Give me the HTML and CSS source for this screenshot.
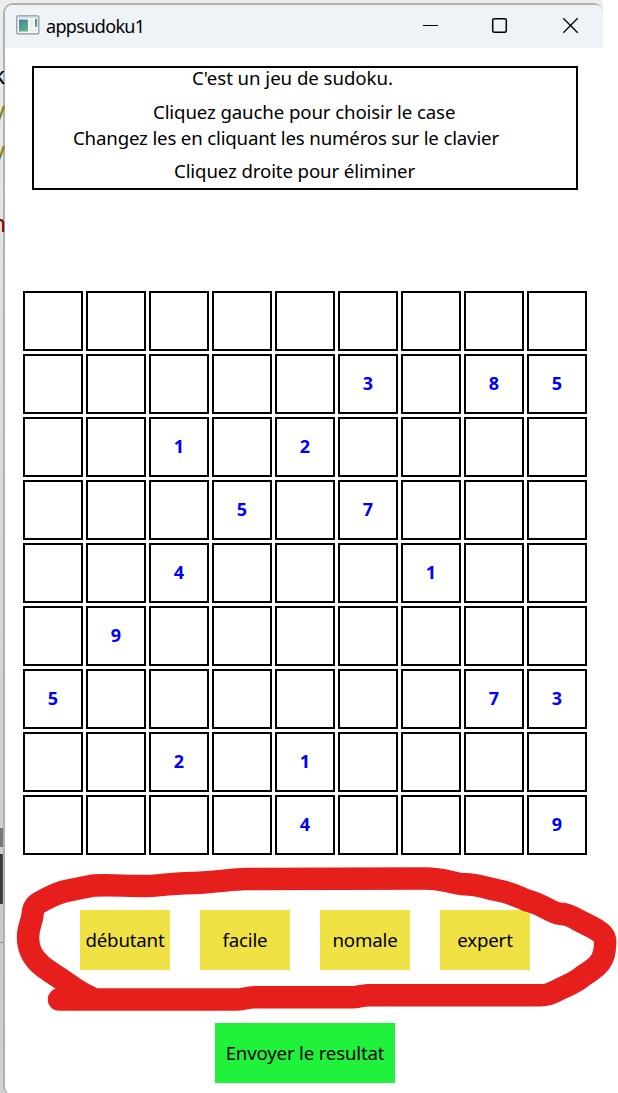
FILE: index.html
```html
<!DOCTYPE html>
<html lang="fr">
<head>
<meta charset="utf-8">
<title>appsudoku1</title>
<link rel="stylesheet" href="styles.css">
</head>
<body>
<div class="backdrop"></div>
<main class="window">
  <header class="titlebar">
    <svg class="app-icon" width="24" height="20" viewBox="0 0 24 20">
      <rect x=".8" y=".8" width="22" height="18" rx="1" fill="#f8f9fa" stroke="#8b9198" stroke-width="1.2"/>
      <path d="M1.5 2h20.500" stroke="#c3cad2" stroke-width="1.400"/>
      <rect x="3" y="4.500" width="9" height="12" fill="url(#pane)"/>
      <rect x="14" y="4" width="3.500" height="8" fill="#eceeee"/>
      <rect x="19" y="4" width="2.200" height="8" fill="url(#pane)"/>
      <rect x="14" y="13" width="7" height="3.500" fill="#ebeceb"/>
      <defs><linearGradient id="pane" x2=".6" y2="1"><stop stop-color="#457fae"/><stop offset="1" stop-color="#5db184"/></linearGradient></defs>
    </svg>
    <h1 class="title">appsudoku1</h1>
    <svg class="controls" width="158" height="18" viewBox="0 0 158 18" fill="none" stroke="#000" stroke-width="1.300">
      <path d="M1 8.500h15" stroke-width="1"/>
      <rect x="70.700" y="1.700" width="13.600" height="13.600" rx="1.500" stroke-width="1.500"/>
      <path d="M141.300 1.300l14.400 14.400M155.700 1.300l-14.400 14.400"/>
    </svg>
  </header>
  <section class="info">
    <p class="line line-intro">C'est un jeu de sudoku.</p>
    <p class="line line-select">Cliquez gauche pour choisir le case</p>
    <p class="line line-change">Changez les en cliquant les numéros sur le clavier</p>
    <p class="line line-erase">Cliquez droite pour éliminer</p>
  </section>
  <section class="board">
    <b></b><b></b><b></b><b></b><b></b><b></b><b></b><b></b><b></b>
    <b></b><b></b><b></b><b></b><b></b><b>3</b><b></b><b>8</b><b>5</b>
    <b></b><b></b><b>1</b><b></b><b>2</b><b></b><b></b><b></b><b></b>
    <b></b><b></b><b></b><b>5</b><b></b><b>7</b><b></b><b></b><b></b>
    <b></b><b></b><b>4</b><b></b><b></b><b></b><b>1</b><b></b><b></b>
    <b></b><b>9</b><b></b><b></b><b></b><b></b><b></b><b></b><b></b>
    <b>5</b><b></b><b></b><b></b><b></b><b></b><b></b><b>7</b><b>3</b>
    <b></b><b></b><b>2</b><b></b><b>1</b><b></b><b></b><b></b><b></b>
    <b></b><b></b><b></b><b></b><b>4</b><b></b><b></b><b></b><b>9</b>
  </section>
  <nav class="levels">
    <button class="level">débutant</button>
    <button class="level">facile</button>
    <button class="level">nomale</button>
    <button class="level">expert</button>
  </nav>
  <button class="submit">Envoyer le resultat</button>
</main>
<div class="edge-text">
  <span class="peek peek-k">k</span>
  <span class="peek peek-y1">y</span>
  <span class="peek peek-y2">y</span>
  <span class="peek peek-n">n</span>
</div>
<svg class="marker" width="618" height="1093" viewBox="0 0 618 1093">
  <path d="M90 997C78 992 70 985 61 979C52 973 47 970 41 965C32 957 28 949 28 937C28 927 32 922 32.500 915C33 905 38 903 44 900C52 896 57 893 66 891L92 885.700C105 884.500 125 886 148 886C160 886 170 883.500 185 883.200C215 883 230 879 246 879L425 878.500C444 878.500 451 883 464 884.300C478 884 488 889 501 891C512 893 520 898 529 901C541 904 549 911 558 913.500C567 914 571 916 578 920C587 925 594 927 601 933C607 938 605 944 604.500 951C603 963 594 969 583 976C575 983 568 985 558 990C550 994 547 995.300 540 995.300L368 995.300C361 995.500 359 997.300 352 997.300L254 997.300C247 997.500 242 999.500 236 999.500L59 999.500"/>
</svg>
</body>
</html>
```
FILE: styles.css
```css
* { box-sizing: border-box; }

body {
  margin: 0;
  width: 618px;
  height: 1093px;
  position: relative;
  overflow: hidden;
  background: #fff;
  color: #000;
  font-family: "Noto Sans", sans-serif;
  font-size: 18.67px;
}

/* Strip of the desktop that shows behind the window */
.backdrop {
  position: absolute;
  left: 0;
  top: 0;
  width: 603px;
  height: 1093px;
  background:
    linear-gradient(#888, #888) 0 942px / 5px 1px no-repeat,
    linear-gradient(90deg, #3a3a3c 2px, #555 2px) 0 854px / 5px 50px no-repeat,
    linear-gradient(#777, #777) 0 828px / 5px 19px no-repeat,
    linear-gradient(#ececec, #e0e0e0 300px, #cfcfcf 820px, #c8c8c8 900px, #d2d2d2);
}

/* Ends of the text lines that reach the window's left edge */
.edge-text {
  position: absolute;
  left: 0;
  top: 0;
  width: 5px;
  height: 260px;
  overflow: hidden;
}
.peek {
  position: absolute;
  right: 0;
  font-size: 23px;
  line-height: 30px;
}
.peek-k { top: 60px; }
.peek-y1 { top: 95px; color: #808000; }
.peek-y2 { top: 135px; color: #808000; }
.peek-n { top: 208px; right: -1px; color: #800000; }

.window {
  position: relative;
  display: flex;
  flex-direction: column;
  width: 600px;
  height: 1091px;
  margin: 3px 0 0 3px;
  border: 2px solid #b1b1b1;
  border-right: 0;
  border-bottom: 0;
  border-radius: 10px 9px 0 8px;
  background: #fff;
}

.titlebar {
  display: flex;
  flex: none;
  height: 43px;
  padding: 0 23px 0 11px;
  border-radius: 8px 7px 0 0;
  background: #eef3f8;
}
.app-icon { margin-top: 10px; flex: none; }
.title {
  margin: 8px auto 0 6px;
  font-size: 18px;
  font-weight: 400;
  line-height: 26px;
  letter-spacing: -0.65px;
}
.controls { margin-top: 12px; flex: none; }

.info {
  flex: none;
  width: 546px;
  height: 124px;
  margin: 18px 0 0 27px;
  border: 2px solid #000;
}
.line {
  margin: 0;
  line-height: 26px;
  height: 26px;
  white-space: nowrap;
  letter-spacing: -0.17px;
}
.line-intro { margin-top: -3px; padding-left: 158px; letter-spacing: -0.05px; }
.line-select { margin-top: 8px; padding-left: 119px; letter-spacing: -0.12px; }
.line-change { padding-left: 39px; }
.line-erase { margin-top: 7px; padding-left: 140px; letter-spacing: -0.12px; }

.board {
  display: grid;
  flex: none;
  grid-template-columns: repeat(9, 60px);
  grid-auto-rows: 60px;
  gap: 3px;
  margin: 101px 0 0 18px;
}
.board b {
  border: 2px solid #000;
  color: #00f;
  font-size: 18px;
  line-height: 54px;
  text-align: center;
}

.levels {
  display: flex;
  flex: none;
  gap: 30px;
  margin: 55px 0 0 75px;
}
.level,
.submit {
  flex: none;
  height: 60px;
  padding: 0 0 1px;
  border: 0;
  font: inherit;
  color: #000;
  letter-spacing: -0.18px;
  white-space: nowrap;
}
.level { width: 90px; background: #f0e244; }
.submit {
  width: 180px;
  margin: 53px 0 0 210px;
  background: #20f23c;
}

/* Freehand highlight drawn over the level buttons */
.marker {
  position: absolute;
  left: 0;
  top: 0;
  fill: none;
  stroke: #e61e1c;
  stroke-width: 22.400px;
  stroke-linecap: round;
  stroke-linejoin: round;
  pointer-events: none;
}
```
